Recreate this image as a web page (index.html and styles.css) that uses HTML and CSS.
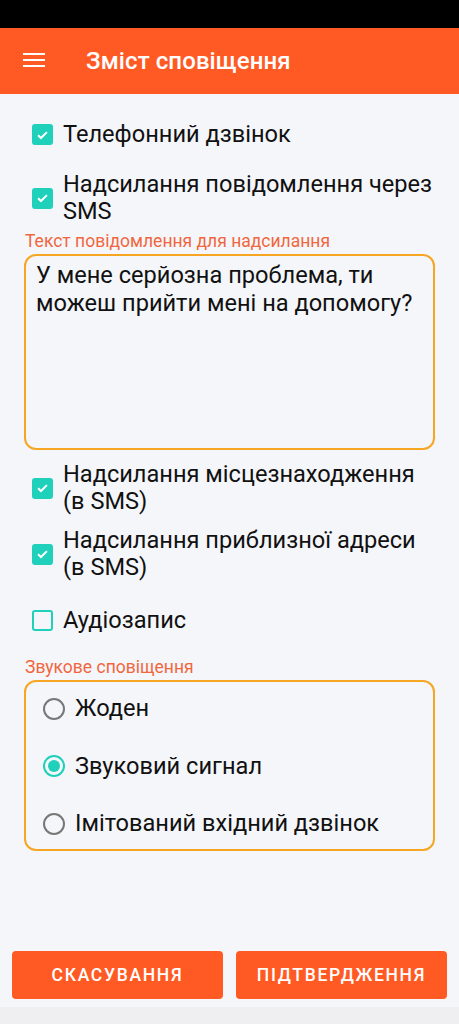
FILE: index.html
```html
<!DOCTYPE html>
<html lang="uk">
<head>
<meta charset="utf-8">
<title>Зміст сповіщення</title>
<link rel="stylesheet" href="styles.css">
</head>
<body>
<div class="screen">
  <div class="statusbar"></div>
  <header class="appbar">
    <svg class="menu" width="22" height="16" viewBox="0 0 22 16" aria-hidden="true">
      <rect x="0" y="1" width="22" height="2" fill="#fff"/>
      <rect x="0" y="7" width="22" height="2" fill="#fff"/>
      <rect x="0" y="13" width="22" height="2" fill="#fff"/>
    </svg>
    <h1 class="title">Зміст сповіщення</h1>
  </header>
  <main class="content">
    <div class="check-row row1">
      <span class="cb checked"><svg viewBox="0 0 20 20" width="20" height="20"><path d="M4.8 10.2l3.4 3.4 7-7" fill="none" stroke="#fff" stroke-width="2.4"/></svg></span>
      <span class="label">Телефонний дзвінок</span>
    </div>
    <div class="check-row row2">
      <span class="cb checked"><svg viewBox="0 0 20 20" width="20" height="20"><path d="M4.8 10.2l3.4 3.4 7-7" fill="none" stroke="#fff" stroke-width="2.4"/></svg></span>
      <span class="label">Надсилання повідомлення через SMS</span>
    </div>
    <div class="field-label lbl1">Текст повідомлення для надсилання</div>
    <div class="textbox">У мене серйозна проблема, ти можеш прийти мені на допомогу?</div>
    <div class="check-row row3">
      <span class="cb checked"><svg viewBox="0 0 20 20" width="20" height="20"><path d="M4.8 10.2l3.4 3.4 7-7" fill="none" stroke="#fff" stroke-width="2.4"/></svg></span>
      <span class="label">Надсилання місцезнаходження (в SMS)</span>
    </div>
    <div class="check-row row4">
      <span class="cb checked"><svg viewBox="0 0 20 20" width="20" height="20"><path d="M4.8 10.2l3.4 3.4 7-7" fill="none" stroke="#fff" stroke-width="2.4"/></svg></span>
      <span class="label">Надсилання приблизної адреси (в SMS)</span>
    </div>
    <div class="check-row row5">
      <span class="cb"></span>
      <span class="label">Аудіозапис</span>
    </div>
    <div class="field-label lbl2">Звукове сповіщення</div>
    <div class="radiobox">
      <div class="radio-row"><span class="rb"></span><span class="label">Жоден</span></div>
      <div class="radio-row"><span class="rb on"></span><span class="label">Звуковий сигнал</span></div>
      <div class="radio-row"><span class="rb"></span><span class="label">Імітований вхідний дзвінок</span></div>
    </div>
  </main>
  <footer class="actions">
    <button class="btn">СКАСУВАННЯ</button>
    <button class="btn">ПІДТВЕРДЖЕННЯ</button>
  </footer>
  <div class="navstrip"></div>
</div>
</body>
</html>
```

FILE: styles.css
```css
* { box-sizing: border-box; }
html, body { margin: 0; padding: 0; }
body {
  font-family: Roboto, "Noto Sans", "Liberation Sans", sans-serif;
  background: #f5f6fa;
  color: #111;
}
.screen {
  width: 459px;
  height: 1024px;
  display: flex;
  flex-direction: column;
}
.statusbar { height: 28px; background: #000; flex: none; }
.appbar {
  height: 66px;
  flex: none;
  background: #ff5a24;
  display: flex;
  align-items: center;
  padding-left: 23px;
}
.menu { display: block; margin-top: -2px; }
.title {
  margin: 0 0 0 41px;
  font-size: 24px;
  font-weight: 500;
  color: #fff;
  letter-spacing: 0.1px;
}
.content {
  flex: 1;
  padding: 0 24px;
  display: flex;
  flex-direction: column;
}
.check-row {
  display: flex;
  align-items: center;
  padding-left: 8px;
}
.label {
  font-size: 23.6px;
  line-height: 27px;
  color: #111;
}
.check-row .label { margin-left: 10px; }
.cb {
  flex: none;
  width: 21px;
  height: 21px;
  border-radius: 3px;
  border: 2px solid #1fd0bb;
  display: flex;
  align-items: center;
  justify-content: center;
}
.cb.checked { background: #1fd0bb; }
.cb svg { display: block; }
.row1 { margin-top: 27px; }
.row2 { margin-top: 23px; }
.field-label {
  font-size: 17.5px;
  line-height: 20px;
  color: #f0673e;
  padding-left: 1px;
}
.lbl1 { margin-top: 6px; }
.textbox {
  margin-top: 3px;
  height: 196px;
  flex: none;
  border: 2px solid #f6a623;
  border-radius: 12px;
  padding: 5px 10px;
  font-size: 23.6px;
  line-height: 28px;
  color: #111;
}
.row3 { margin-top: 11px; }
.row4 { margin-top: 12px; }
.row5 { margin-top: 26px; }
.lbl2 { margin-top: 23px; }
.radiobox {
  margin-top: 3px;
  height: 171px;
  flex: none;
  border: 2px solid #f6a623;
  border-radius: 12px;
  padding: 0 0 0 17px;
  display: flex;
  flex-direction: column;
}
.radio-row {
  height: 57.5px;
  flex: none;
  display: flex;
  align-items: center;
}
.radio-row:first-child { margin-top: -2px; }
.radio-row .label { margin-left: 10px; }
.rb {
  flex: none;
  width: 22px;
  height: 22px;
  border-radius: 50%;
  border: 2px solid #777;
  display: flex;
  align-items: center;
  justify-content: center;
}
.rb.on { border-color: #1fd0bb; }
.rb.on::after {
  content: "";
  width: 12px;
  height: 12px;
  border-radius: 50%;
  background: #1fd0bb;
}
.actions {
  flex: none;
  display: flex;
  gap: 13px;
  padding: 0 12px 8px;
}
.btn {
  flex: 1;
  height: 48px;
  border: none;
  border-radius: 4px;
  background: #ff5a24;
  color: #fff;
  font-family: Roboto, "Noto Sans", "Liberation Sans", sans-serif;
  font-size: 17.5px;
  font-weight: 500;
  letter-spacing: 1.7px;
  padding: 0;
}
.navstrip { height: 17px; flex: none; background: #efeff1; }
```
